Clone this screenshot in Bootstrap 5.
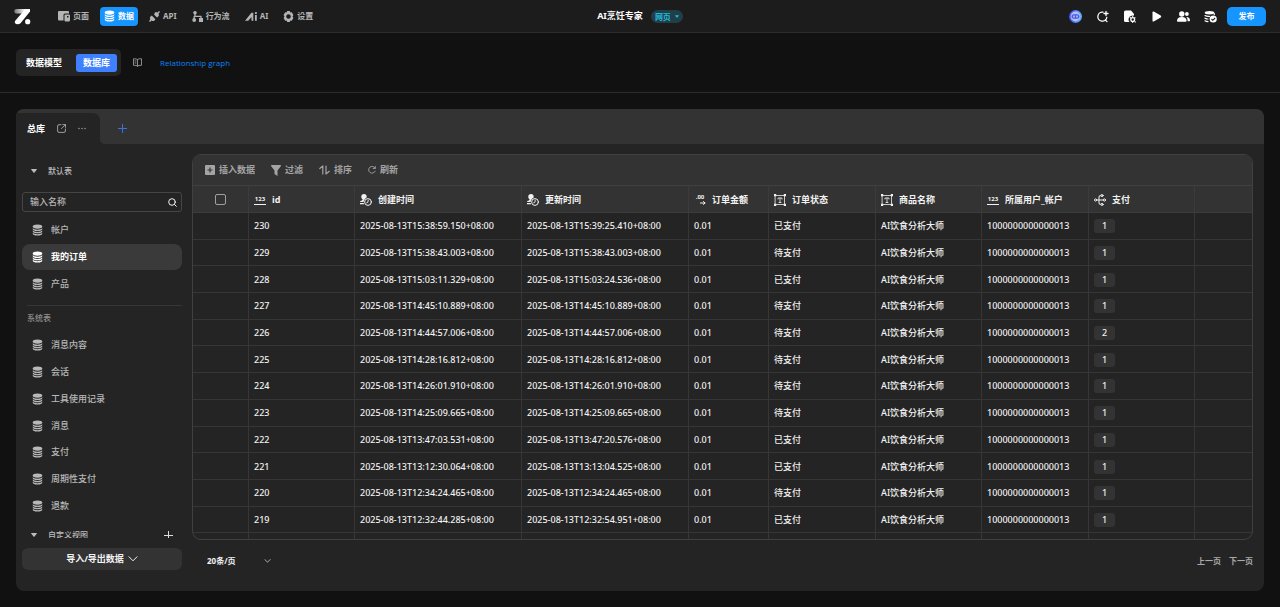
<!DOCTYPE html>
<html lang="zh-CN">
<head>
<meta charset="utf-8">
<meta name="viewport" content="width=device-width, initial-scale=1">
<title>数据库</title>
<link href="https://cdn.jsdelivr.net/npm/bootstrap@5.3.0/dist/css/bootstrap.min.css" rel="stylesheet">
<style>
  :root { --ink:#f2f2f2; --dim:#a9a9a9; --panel:#242424; --raised:#333; --line:#363636; --blue:#1694ff; --indigo:#3f80ff; }
  body { background:#111; color:var(--ink); font:500 9px/14px "Noto Sans","Noto Sans CJK SC",sans-serif; }
  svg { display:block; flex:none; fill:currentColor; }
  .ln { fill:none; stroke:currentColor; stroke-linecap:round; stroke-linejoin:round; }
  button, input, select { font:inherit; }
  .plain { background:none; border:0; padding:0; color:inherit; }
  .s8 { font-size:8px; }
  .fw-x { font-weight:700; }
  .dim { color:var(--dim); }
  .shrinkable { min-width:0; min-height:0; }

  .topbar { height:33px; background:#1c1c1c; border-bottom:1px solid #2b2b2b; padding:0 14px; }
  .side-slot { flex:1 1 0; }
  .menu { gap:7px; margin-left:23px; }
  .menu a { height:19px; padding:0 4px; gap:3px; border-radius:4px; color:#b4b4b4; text-decoration:none; font-size:8px; font-weight:700; white-space:nowrap; }
  .menu a.active { background:var(--blue); color:#fff; }
  .pill { background:#1f4049; color:#23b8dc; border:0; border-radius:7px; height:13px; line-height:13px; padding:0 4px; gap:4px; font-size:8px; font-weight:700; }
  .tools { gap:14px; }
  .publish { width:39px; height:19px; background:var(--blue); color:#fff; border:0; border-radius:5px; padding:0; font-size:8px; font-weight:700; margin-left:10px; }

  .subbar { height:60px; padding:0 16px; border-bottom:1px solid #2b2b2b; }
  .seg { background:var(--panel); border-radius:5px; height:27px; width:105px; padding:0 4px 0 10px; }
  .seg button { font-weight:700; white-space:nowrap; }
  .seg .on { background:var(--indigo); color:#fff; border-radius:3px; height:18px; width:41px; }
  .rel { color:#0c82f5; font-family:"Open Sans",sans-serif; font-size:8px; font-weight:400; margin-left:18px; text-decoration:none; }

  .panel { background:var(--panel); border-radius:8px; margin:16px; min-height:320px; overflow:hidden; }
  .strip { height:35px; background:var(--raised); padding-top:4px; }
  .tab { background:var(--panel); width:84px; border-radius:0 7px 0 0; padding-left:11px; }
  .curve { align-self:flex-end; }

  .aside { width:160px; margin-left:6px; margin-right:10px; }
  .scroll-y { overflow:hidden; min-height:0; flex:1 1 0; }
  .aside .scroll-y { padding-top:19px; }
  .group-title { height:16px; gap:11px; padding-left:9px; font-size:8px; color:#bdbdbd; }
  .search { height:20px; border:1px solid #454545; border-radius:3px; padding:0 4px 0 7px; margin:13px 0 5px; }
  .search input { background:none; border:0; outline:0; padding:0; color:var(--ink); min-width:0; }
  .search input::placeholder { color:#b5b5b5; opacity:1; }
  .tables { display:flex; flex-direction:column; flex:none; }
  .tables.three { height:80px; } .tables.seven { height:187px; }
  .tables a { flex:1 1 0; display:flex; align-items:center; gap:8px; padding-left:10px; color:#b8b8b8; text-decoration:none; border-radius:8px; }
  .tables a.active { background:#3a3a3a; color:#fff; font-weight:700; }
  .sys { border-top:1px solid var(--line); margin:8px 0 0 5px; padding:5px 0 7px; color:#909090; }
  .export { height:22px; margin:10px 0 21px; background:var(--raised); border-radius:6px; font-weight:700; }

  .data-side { margin-right:11px; }
  .grid-card { margin:10px 0 0; border:1px solid #404040; border-radius:9px; }
  .bar { height:31px; background:var(--raised); border-bottom:1px solid #404040; padding-left:12px; gap:16px; color:#a4a4a4; font-weight:700; }
  .bar button { display:flex; align-items:center; gap:4px; white-space:nowrap; }
  .rows { table-layout:fixed; width:100%; min-width:1040px; height:374px; border-collapse:separate; border-spacing:0; }
  .rows th, .rows td { height:26px; padding:1px 0 0 5px; white-space:nowrap; overflow:hidden; border-right:1px solid var(--line); border-bottom:1px solid var(--line); vertical-align:middle; }
  .rows th { height:27px; background:var(--raised); border-color:#3b3b3b; font-weight:700; }
  .rows th:last-child, .rows td:last-child { border-right:0; }
  .rows th > span { display:flex; align-items:center; gap:6px; }
  .c-pick { width:56px; } .c-id { width:106px; } .c-time { width:167px; } .c-amt { width:80px; } .c-txt { width:107px; }
  .glyph { display:flex; flex-direction:column; align-items:center; width:12px; height:11px; font-size:6px; line-height:7px; }
  .glyph.under { border-bottom:1px solid currentColor; height:10px; line-height:8px; }
  .pick { display:block; appearance:none; width:11px; height:11px; border:1px solid #a0a0a0; border-radius:2px; margin:0 0 0 17px; }
  .pick:checked { background:var(--indigo); }
  .count { display:block; width:21px; height:14px; line-height:14px; text-align:center; background:var(--raised); border-radius:3px; }
  .pager { height:51px; padding:0 0 10px 15px; }
  .size { appearance:none; background:none; border:0; color:var(--ink); padding:0; width:64px; outline:0; font-size:8px; font-weight:700; }
  .size-box { display:grid; align-items:center; }
  .size-box > * { grid-area:1/1; } .size-box svg { justify-self:end; pointer-events:none; }
</style>
</head>
<body class="vh-100 d-flex flex-column overflow-hidden">
<svg width="0" height="0" class="position-absolute" aria-hidden="true">
  <symbol id="db" viewBox="0 0 12 12"><ellipse cx="6" cy="2.300" rx="5.200" ry="2.300"/><path d="M.8 4q1 1.600 5.200 1.600T11.200 4v.8Q11 7 6 7T.8 4.800zM.8 6.600q1 1.600 5.200 1.600t5.200-1.600v.7Q11 9.500 6 9.500T.8 7.300zM.8 9.100q1 1.600 5.200 1.600t5.200-1.600v.7Q11 12 6 12T.8 9.800z"/></symbol>
  <symbol id="time" viewBox="0 0 12 12"><circle cx="4" cy="2.700" r="2.700"/><path d="M2.600 4h2.800v1.600L4.500 8H0c0-1.700 2.600-1.300 2.600-2.600zM0 9h4v1.300H0z"/><circle cx="8" cy="8" r="4.400" fill="#333"/><circle cx="8" cy="8" r="3.400" class="ln"/><path class="ln" stroke-width=".9" d="M8.200 6.200 7.900 8.300l-1.200.5"/></symbol>
  <symbol id="txt" viewBox="0 0 12 12"><path class="ln" stroke-width=".8" d="M1.500 1.500h9v9h-9zM4 5V4h4v1M6 4v4.500M5 8.500h2"/><path d="M0 0h2.200v2.200H0zM9.800 0H12v2.200H9.800zM0 9.800h2.200V12H0zM9.800 9.800H12V12H9.800z"/></symbol>
  <symbol id="link" viewBox="0 0 12 12"><g class="ln"><circle cx="1.600" cy="6" r="1.100"/><circle cx="10.400" cy="6" r="1.100"/><circle cx="8" cy="1.600" r="1.100"/><circle cx="8" cy="10.400" r="1.100"/><path d="M2.800 6h6.400M6.900 1.600H6.300Q5 1.600 5 3v6q0 1.400 1.300 1.400h.6"/></g></symbol>
  <symbol id="down" viewBox="0 0 6 4"><path d="M.6 0h4.800q.8 0 .3.700L3.500 3.600q-.5.600-1 0L.3.700Q-.2 0 .6 0z"/></symbol>
  <symbol id="chev" viewBox="0 0 10 6"><path class="ln" d="m1 .8 4 4 4-4"/></symbol>
</svg>

<header class="topbar d-flex align-items-center flex-shrink-0">
  <div class="side-slot d-flex align-items-center">
    <a href="#" class="text-white" aria-label="首页"><svg width="17" height="17" viewBox="0 0 17 17"><defs><linearGradient id="fade"><stop stop-color="#777"/><stop offset=".7" stop-color="#fff"/></linearGradient></defs><path fill="url(#fade)" d="M2.500 1H16l-3 4.500H2.500a2.200 2.200 0 0 1 0-4.500z"/><path d="M16 1v2.500L6.500 15.200Q5 16.500 2 16 0 15 1 13L10.500 2z"/><circle cx="13.700" cy="13.700" r="2.600"/></svg></a>
    <nav class="menu d-flex">
      <a href="#" class="d-flex align-items-center"><svg width="12" height="12" viewBox="0 0 12 12"><path d="M0 2q0-1 1-1h9q1 0 1 1v1.500H7Q5.500 3.500 5.500 5v5.500H1q-1 0-1-1z"/><path fill-rule="evenodd" d="M7.500 4.500h3.500q1 0 1 1V10q0 1.500-1 1.500H7.500q-1 0-1-1v-5q0-1 1-1zM9 6v1.500h1.500V6z"/></svg>页面</a>
      <a href="#" class="active d-flex align-items-center"><svg width="11" height="12"><use href="#db"/></svg>数据</a>
      <a href="#" class="d-flex align-items-center"><svg width="11" height="11" viewBox="0 0 11 11"><path d="m6 1.500 1-.5 1.500.5L10 0l1 1-1.500 1.500q1.200 2-.5 3.300L8 6.500 5 3.500zM2.800 4.600 6.400 8.200 5.500 9.500q-1.500 1-3 0L1 11l-1-1 1.300-1.500q-1-1.500 0-2.800z"/></svg>API</a>
      <a href="#" class="d-flex align-items-center"><svg width="11" height="11" viewBox="0 0 11 11"><circle cx="3" cy="1.800" r="1.800"/><circle cx="2.200" cy="9" r="1.900"/><path d="M7 7h4v4H7z"/><path class="ln" stroke-width="1.300" d="M3 2v3M2.200 8V5.300H9V8"/></svg>行为流</a>
      <a href="#" class="d-flex align-items-center"><svg width="12" height="11" viewBox="0 0 13 11"><path d="M0 10 7 1.500h2V10H7V6L3.500 10zM10.800 4h2v6h-2z"/><circle cx="11.800" cy="1.800" r="1.200"/></svg>AI</a>
      <a href="#" class="d-flex align-items-center"><svg width="11" height="11" viewBox="0 0 11 11"><path fill-rule="evenodd" d="M4.200 0h2.600l.5 1.400 1.500-.2 1.600 2.700-.9 1.600.9 1.600-1.600 2.700-1.500-.2-.5 1.400H4.200l-.5-1.400-1.500.2L.6 7.100l.9-1.600-.9-1.600 1.600-2.700 1.500.2zM5.500 3.200a2.300 2.300 0 1 0 0 4.600 2.300 2.300 0 0 0 0-4.600z"/></svg>设置</a>
    </nav>
  </div>
  <div class="d-flex align-items-center fw-x text-white text-nowrap">AI烹饪专家<button class="pill d-flex align-items-center ms-2">网页<svg width="4" height="3"><use href="#down"/></svg></button></div>
  <div class="side-slot d-flex align-items-center justify-content-end text-white">
    <div class="tools d-flex">
      <button class="plain text-white" aria-label="助手"><svg width="13" height="13" viewBox="0 0 13 13"><defs><linearGradient id="bot"><stop stop-color="#4b49ef"/><stop offset="1" stop-color="#55b5ff"/></linearGradient></defs><circle cx="6.500" cy="6.500" r="6.500" fill="url(#bot)"/><circle cx="6.500" cy="6.500" r="4.900" fill="#aebeff"/><rect x="2.500" y="4.300" width="8" height="4.400" rx="2.200" fill="#4c5bd8"/><path stroke="#fff" d="M5 5.500v2M8 5.500v2"/></svg></button>
      <button class="plain text-white" aria-label="搜索"><svg width="13" height="13" viewBox="0 0 13 13"><path class="ln" stroke-width="1.300" d="M7 2.200a4.500 4.500 0 1 0 3.800 5.200M9.300 10l1.700 1.600M10 1.500v4M8 3.500h4"/></svg></button>
      <button class="plain text-white" aria-label="文件设置"><svg width="13" height="13" viewBox="0 0 13 13"><path d="M1 2q0-1.500 1.500-1.500H8L11 4v1.500Q5.500 5.500 5.500 9.500q0 1.500 1 2.500h-4Q1 12 1 10.500z"/><circle cx="9.700" cy="9.500" r="1.900" class="ln" stroke-width="1.300"/><path d="M9.200 6h1v1.500h-1zM9.200 11.500h1V13h-1zM6.500 7.400l.7-.7 1 1-.7.700zM11.300 11.800l.7-.7 1 1-.7.700zM12 7l.7.7-1 1-.7-.7z"/></svg></button>
      <button class="plain text-white" aria-label="预览"><svg width="13" height="13" viewBox="0 0 13 13"><path d="M2.500 2.300Q2.500 1 3.700 1.600l7 4q1.200.9 0 1.800l-7 4q-1.200.6-1.200-.700z"/></svg></button>
      <button class="plain text-white" aria-label="成员"><svg width="13" height="13" viewBox="0 0 13 13"><circle cx="4.800" cy="4" r="2.700"/><path d="M0 11q0-4 4.800-4t4.800 4q0 .7-.8.700h-8Q0 11.700 0 11z"/><circle cx="9.900" cy="4" r="1.900"/><path d="M9.300 7Q13 7 13 10.500q0 .7-.7.700h-1.600Q10.700 8.500 9.300 7z"/></svg></button>
      <button class="plain text-white" aria-label="数据检查"><svg width="13" height="13" viewBox="0 0 13 13"><ellipse cx="5.500" cy="2.700" rx="4.800" ry="1.700"/><path class="ln" stroke-width="1.200" d="M1 5.600q1.500 1.100 4.500.8M1 8.200q1.200.8 3 .8M1 10.800q1.200.8 3 .8M10.300 3.500v1"/><circle cx="9.200" cy="9" r="3.600"/><path fill="none" stroke="#1c1c1c" stroke-width="1.100" d="m7.500 9 1.300 1.300 2.300-2.300"/></svg></button>
    </div>
    <button class="publish">发布</button>
  </div>
</header>

<div class="subbar d-flex align-items-center flex-shrink-0">
  <div class="seg d-flex align-items-center justify-content-between"><button class="plain text-white">数据模型</button><button class="plain on">数据库</button></div>
  <a href="#" class="ms-2 ps-1 dim" aria-label="文档"><svg width="9" height="9" viewBox="0 0 9 9"><path class="ln" stroke-width=".8" d="M4.500 1.500Q3.500.5.500.800v6.500q3-.2 4 .8 1-1 4-.8V.8Q5.500.5 4.500 1.500v6.600M2 3h1M2 5h1"/></svg></a>
  <a href="#" class="rel">Relationship graph</a>
</div>

<main class="panel d-flex flex-column flex-fill">
  <div class="strip d-flex flex-shrink-0">
    <div class="tab d-flex align-items-center"><span class="fw-x text-white">总库</span>
      <button class="plain dim ms-2 ps-1" aria-label="打开"><svg width="9" height="9" viewBox="0 0 9 9"><path class="ln" stroke-width=".9" d="M4 .7H2Q.600.700.600 2v5q0 1.400 1.400 1.400h5Q8.400 8.400 8.400 7V5M5.800.600h2.700v2.700M8.400.7 4.500 4.600"/></svg></button>
      <button class="plain dim ms-2 ps-1" aria-label="更多"><svg width="8" height="3" viewBox="0 0 8 3"><circle cx="1" cy="1.500" r=".7"/><circle cx="4" cy="1.500" r=".7"/><circle cx="7" cy="1.500" r=".7"/></svg></button>
    </div>
    <svg class="curve" width="5" height="5" viewBox="0 0 5 5"><path fill="#242424" d="M0 0q0 5 5 5H0z"/></svg>
    <button class="plain ms-2 ps-1" aria-label="新建"><svg width="11" height="11" viewBox="0 0 11 11"><path stroke="#3a72e0" d="M5.500 1v9M1 5.500h9"/></svg></button>
  </div>

  <div class="d-flex flex-fill shrinkable">
    <aside class="aside d-flex flex-column flex-shrink-0">
      <div class="scroll-y d-flex flex-column">
        <button class="plain group-title d-flex align-items-center flex-shrink-0"><svg width="6" height="4" fill="#fff"><use href="#down"/></svg>默认表</button>
        <label class="search d-flex align-items-center flex-shrink-0"><input class="flex-fill" type="text" placeholder="输入名称" aria-label="输入名称"><svg width="9" height="9" viewBox="0 0 9 9"><g class="ln"><circle cx="4" cy="4" r="3.300"/><path d="m6.500 6.500 1.800 1.800"/></g></svg></label>
        <nav class="tables three">
          <a href="#"><svg width="11" height="12"><use href="#db"/></svg>帐户</a>
          <a href="#" class="active"><svg width="11" height="12"><use href="#db"/></svg>我的订单</a>
          <a href="#"><svg width="11" height="12"><use href="#db"/></svg>产品</a>
        </nav>
        <div class="sys s8 flex-shrink-0">系统表</div>
        <nav class="tables seven">
          <a href="#"><svg width="11" height="12"><use href="#db"/></svg>消息内容</a>
          <a href="#"><svg width="11" height="12"><use href="#db"/></svg>会话</a>
          <a href="#"><svg width="11" height="12"><use href="#db"/></svg>工具使用记录</a>
          <a href="#"><svg width="11" height="12"><use href="#db"/></svg>消息</a>
          <a href="#"><svg width="11" height="12"><use href="#db"/></svg>支付</a>
          <a href="#"><svg width="11" height="12"><use href="#db"/></svg>周期性支付</a>
          <a href="#"><svg width="11" height="12"><use href="#db"/></svg>退款</a>
        </nav>
        <div class="d-flex align-items-center justify-content-between flex-shrink-0 mt-2 pe-2">
          <button class="plain group-title d-flex align-items-center"><svg width="6" height="4" fill="#fff"><use href="#down"/></svg>自定义视图</button>
          <button class="plain" aria-label="添加视图"><svg width="11" height="11" viewBox="0 0 11 11"><path stroke="#ddd" d="M5.500 1v9M1 5.500h9"/></svg></button>
        </div>
      </div>
      <button class="plain export d-flex align-items-center justify-content-center gap-1 flex-shrink-0">导入/导出数据<svg width="10" height="6"><use href="#chev"/></svg></button>
    </aside>

    <section class="data-side flex-fill d-flex flex-column shrinkable">
      <div class="grid-card scroll-y d-flex flex-column">
        <div class="bar d-flex align-items-center flex-shrink-0">
          <button class="plain"><svg width="10" height="10" viewBox="0 0 10 10"><rect width="10" height="10" rx="1"/><path stroke="#333" stroke-width="1.200" d="M5 2.500v5M2.500 5h5"/></svg>插入数据</button>
          <button class="plain"><svg width="10" height="11" viewBox="0 0 10 11"><path d="M.5 0h9q.8.600.300 1.200L6.500 5.500V11L3.500 9V5.500L.2 1.200Q-.3.600.5 0z"/></svg>过滤</button>
          <button class="plain"><svg width="11" height="10" viewBox="0 0 11 10"><path class="ln" stroke-width="1.200" d="M.8 3.500 3.800 1v8M7 1v8l3.200-2.700"/></svg>排序</button>
          <button class="plain"><svg width="8" height="8" viewBox="0 0 8 8"><path class="ln" stroke-width=".9" d="M7 2A3.400 3.400 0 1 0 7.200 5.200M7.300.5v2H5.200"/></svg>刷新</button>
        </div>
        <div class="flex-fill overflow-hidden">
          <table class="rows">
            <colgroup><col class="c-pick"><col class="c-id"><col class="c-time"><col class="c-time"><col class="c-amt"><col class="c-txt"><col class="c-id"><col class="c-txt"><col class="c-id"><col></colgroup>
            <thead><tr>
              <th><input type="checkbox" class="pick" aria-label="全选"></th>
              <th><span><i class="glyph under fst-normal">123</i>id</span></th>
              <th><span><svg width="12" height="12"><use href="#time"/></svg>创建时间</span></th>
              <th><span><svg width="12" height="12"><use href="#time"/></svg>更新时间</span></th>
              <th><span><i class="glyph fst-normal">.00<svg class="align-self-end" width="6" height="4" viewBox="0 0 6 4"><path class="ln" d="M.5 2h4.500M3.500.600 5 2 3.500 3.400"/></svg></i>订单金额</span></th>
              <th><span><svg width="12" height="12"><use href="#txt"/></svg>订单状态</span></th>
              <th><span><svg width="12" height="12"><use href="#txt"/></svg>商品名称</span></th>
              <th><span><i class="glyph under fst-normal">123</i>所属用户_帐户</span></th>
              <th><span><svg width="12" height="12"><use href="#link"/></svg>支付</span></th>
              <th></th>
            </tr></thead>
            <tbody id="orders"></tbody>
          </table>
        </div>
      </div>
      <div class="pager d-flex align-items-center justify-content-between flex-shrink-0">
        <div class="size-box"><select class="size" aria-label="每页条数"><option>20条/页</option><option>50条/页</option></select><svg width="7" height="4"><use href="#chev"/></svg></div>
        <div class="d-flex gap-2 s8 fw-x dim"><button class="plain">上一页</button><button class="plain">下一页</button></div>
      </div>
    </section>
  </div>
</main>

<script src="https://cdn.jsdelivr.net/npm/bootstrap@5.3.0/dist/js/bootstrap.bundle.min.js"></script>
<script>
  // id, created, updated, status, number of payments
  const orders = [
    [230, '15:38:59.150', '15:39:25.410', '已支付', 1],
    [229, '15:38:43.003', '15:38:43.003', '待支付', 1],
    [228, '15:03:11.329', '15:03:24.536', '已支付', 1],
    [227, '14:45:10.889', '14:45:10.889', '待支付', 1],
    [226, '14:44:57.006', '14:44:57.006', '待支付', 2],
    [225, '14:28:16.812', '14:28:16.812', '待支付', 1],
    [224, '14:26:01.910', '14:26:01.910', '待支付', 1],
    [223, '14:25:09.665', '14:25:09.665', '待支付', 1],
    [222, '13:47:03.531', '13:47:20.576', '已支付', 1],
    [221, '13:12:30.064', '13:13:04.525', '已支付', 1],
    [220, '12:34:24.465', '12:34:24.465', '待支付', 1],
    [219, '12:32:44.285', '12:32:54.951', '已支付', 1]
  ];
  const stamp = t => `2025-08-13T${t}+08:00`;
  document.getElementById('orders').innerHTML = orders.map(([id, made, changed, state, n]) =>
    `<tr><td></td><td>${id}</td><td>${stamp(made)}</td><td>${stamp(changed)}</td><td>0.01</td><td>${state}</td><td>AI饮食分析大师</td><td>1000000000000013</td><td><span class="count">${n}</span></td><td></td></tr>`
  ).join('') + `<tr>${'<td></td>'.repeat(10)}</tr>`;
</script>
</body>
</html>
